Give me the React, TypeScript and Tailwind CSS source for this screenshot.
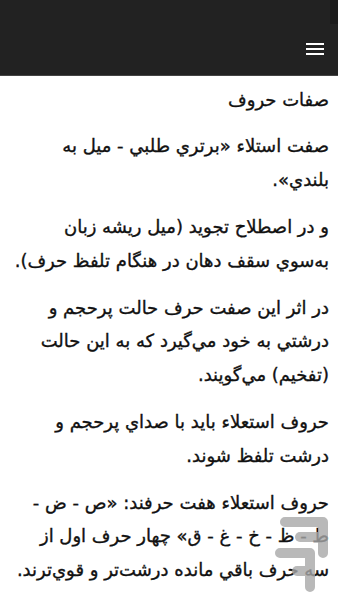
import React from 'react'

const paragraphs: string[][] = [
    ['صفت استلاء «برتري طلبي - ميل به', 'بلندي».'],
    ['و در اصطلاح تجويد (ميل ريشه زبان', 'به‌سوي سقف دهان در هنگام تلفظ حرف).'],
    ['در اثر اين صفت حرف حالت پرحجم و', 'درشتي به خود مي‌گيرد كه به اين حالت', '(تفخيم) مي‌گويند.'],
    ['حروف استعلاء بايد با صداي پرحجم و', 'درشت تلفظ شوند.'],
    ['حروف استعلاء هفت حرفند: «ص - ض -', 'ط - ظ - خ - غ - ق» چهار حرف اول از', 'سه حرف باقي مانده درشت‌تر و قوي‌ترند.'],
]

function Watermark() {
    // faded store logo over the bottom-right corner
    return (
        <svg width="70" height="95" viewBox="0 0 70 95" className="absolute right-0 bottom-0 opacity-80" fill="none">
            <g stroke="#a8a8a8" strokeWidth="10" strokeLinecap="round" strokeLinejoin="round">
                <path d="M17 17 H55 V48" />
                <path d="M32 32 H50" />
                <path d="M12 48 H42 V82" />
                <path d="M29 66 H42" />
            </g>
        </svg>
    )
}

export default function App() {
    return (
        <div className="relative w-[338px] h-[600px] overflow-hidden bg-white">
            <header className="relative h-[76px] bg-[#222222] border-b border-[#444] flex items-end justify-end pr-[14px] pb-[20px]">
                <div className="absolute top-0 right-0 w-[8px] h-[24px] bg-[#1b1b1b]" />
                <button className="flex flex-col gap-[3px] w-[18px]">
                    <span className="block h-[2px] bg-white" />
                    <span className="block h-[2px] bg-white" />
                    <span className="block h-[2px] bg-white" />
                </button>
            </header>

            <main dir="rtl" className="pr-[9px] pl-2 pt-[7px] text-[#111] font-['DejaVu_Sans',sans-serif] text-[18px] leading-[33.4px] [-webkit-text-stroke:0.35px_#111]">
                <h1 className="text-[18px] font-normal mb-[13px]">صفات حروف</h1>
                {paragraphs.map((lines, pIdx) => (
                    <p key={pIdx} className="mb-[14px]">
                        {lines.map((line, lIdx) => (
                            <span key={lIdx} className="block whitespace-nowrap">{line}</span>
                        ))}
                    </p>
                ))}
            </main>

            <Watermark />
        </div>
    )
}
